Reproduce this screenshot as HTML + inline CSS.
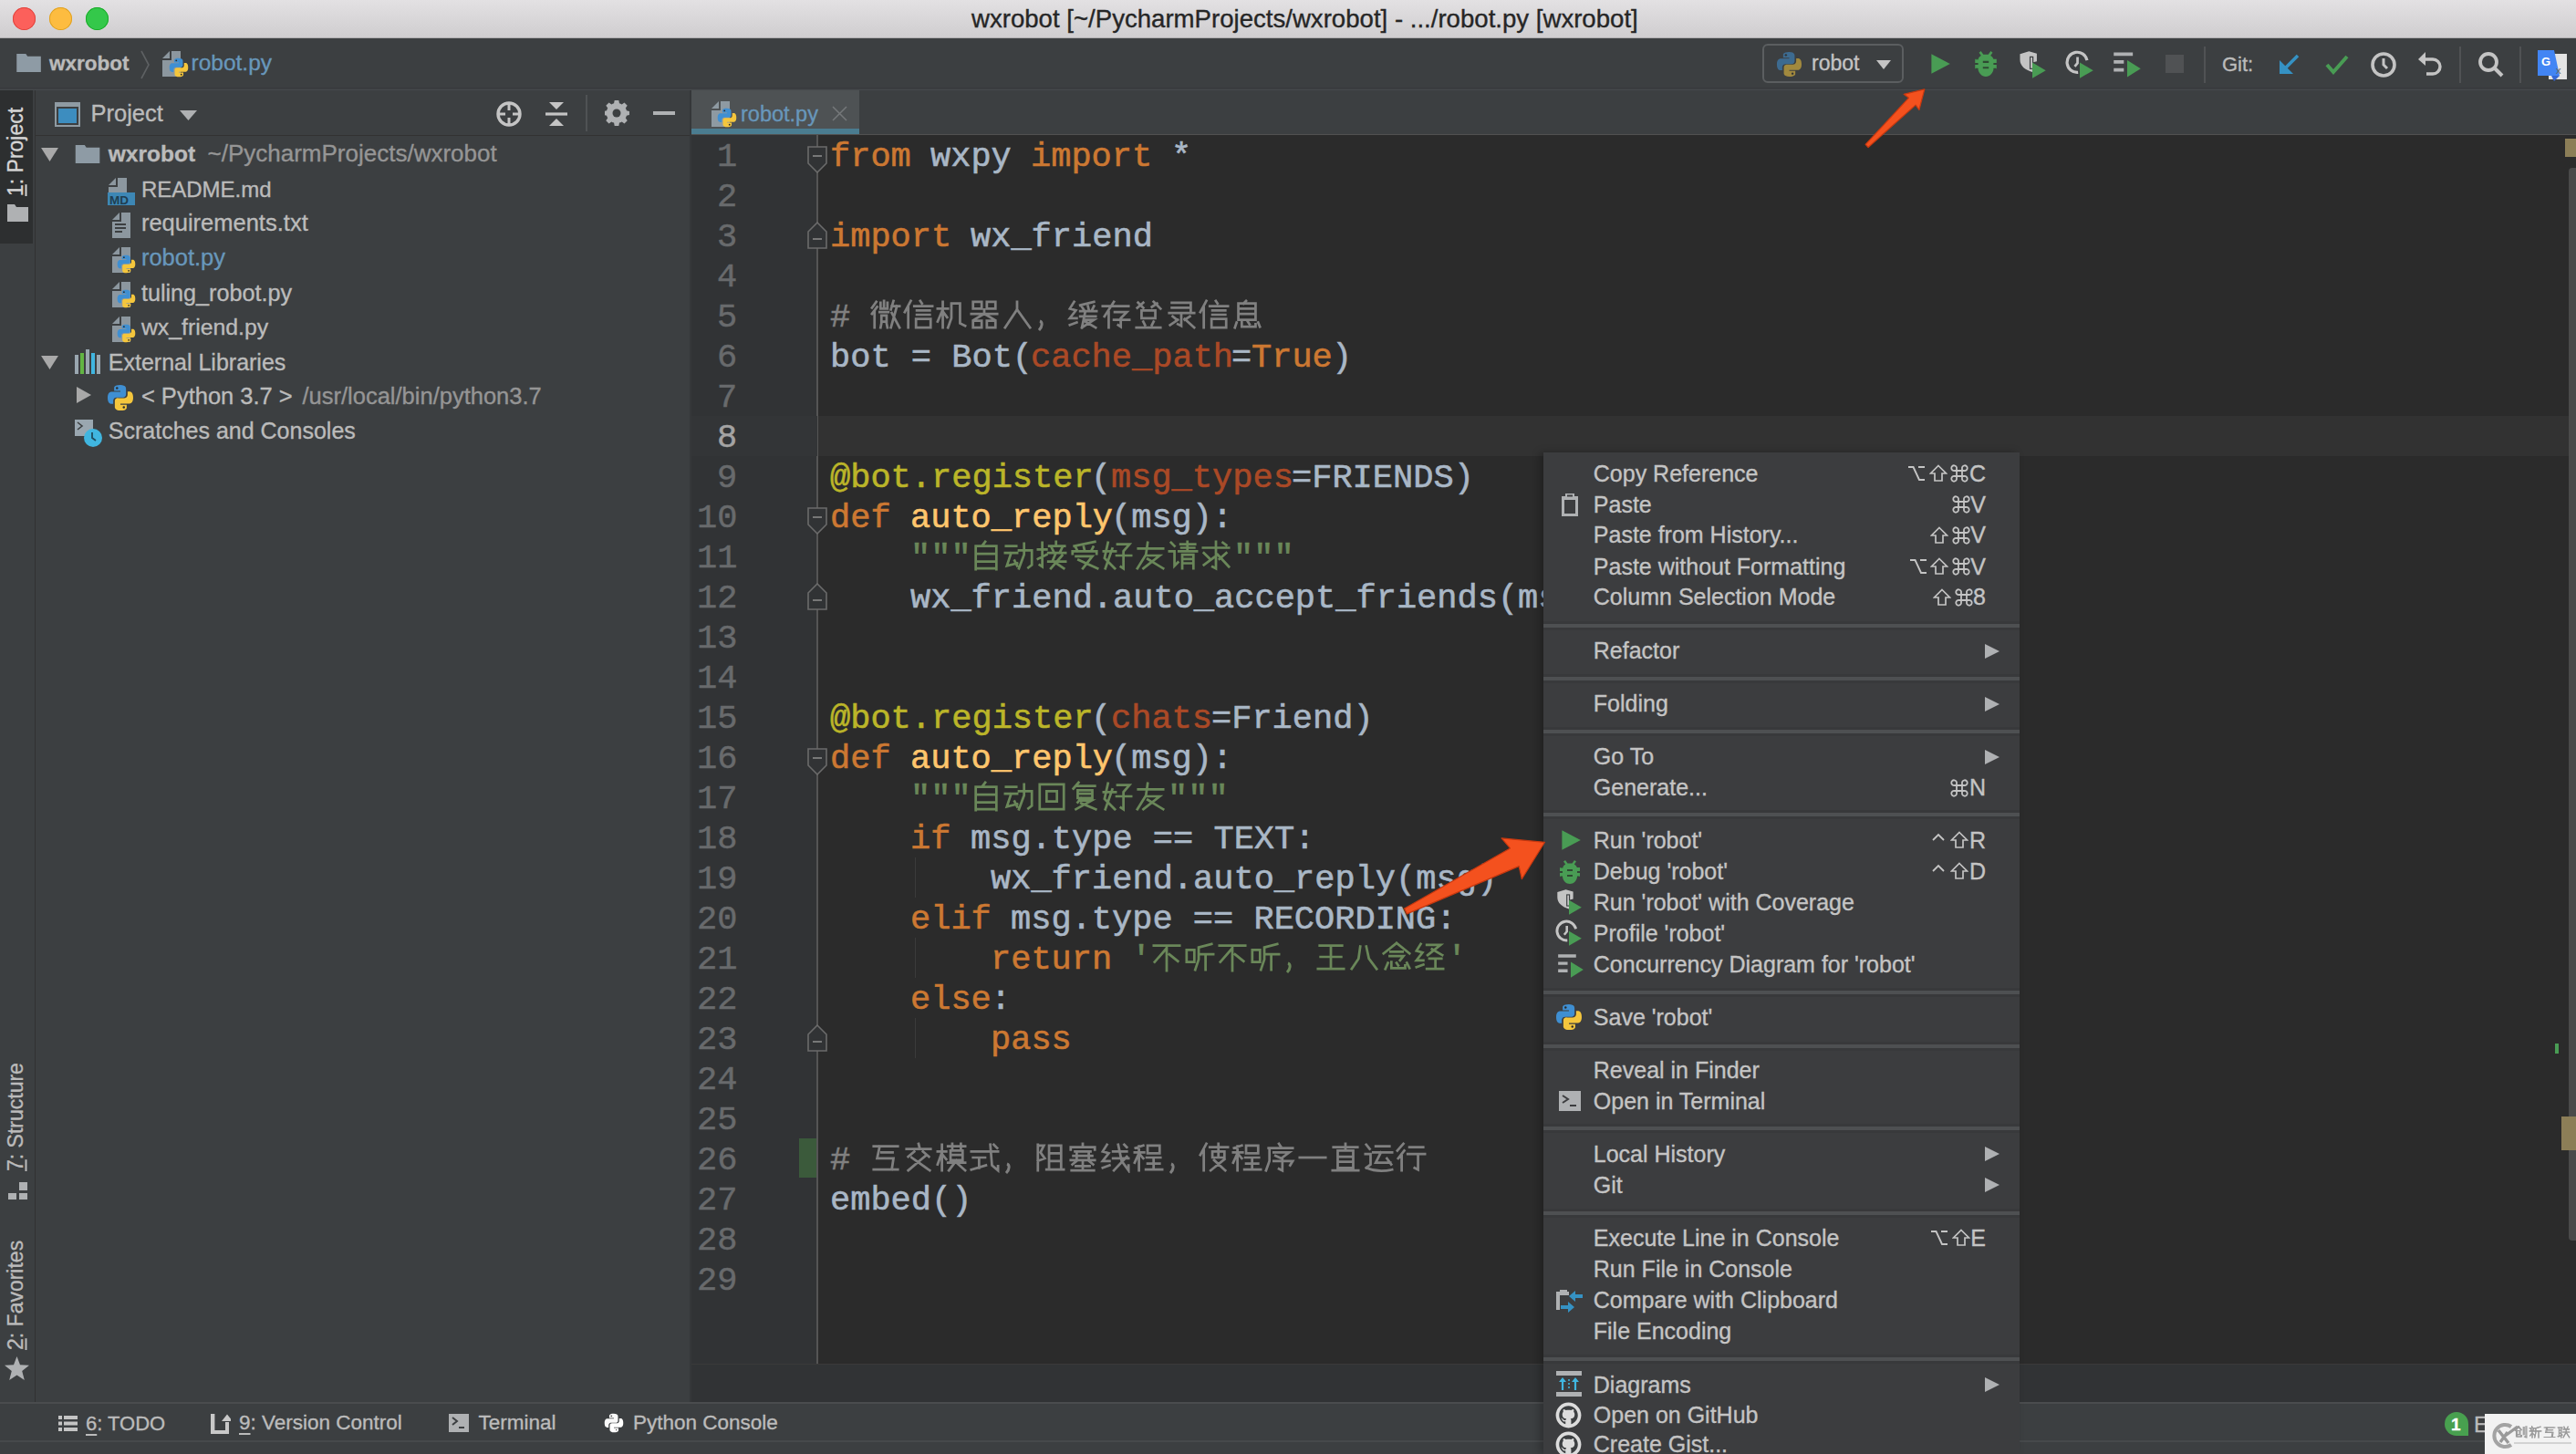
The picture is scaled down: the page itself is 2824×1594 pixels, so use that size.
<!DOCTYPE html><html><head><meta charset="utf-8"><style>
html,body{margin:0;padding:0;}
body{width:2824px;height:1594px;overflow:hidden;position:relative;background:#3c3f41;}
.b,.t,.s{position:absolute;}
.t{white-space:pre;-webkit-text-stroke:0.35px currentColor;}
</style></head><body><div class="b" style="left:0px;top:0px;width:2824px;height:42px;background:linear-gradient(#e3e1e3,#cfcdcf);border-bottom:1px solid #b0aeb0;box-sizing:border-box"></div>
<div class="b" style="left:13.5px;top:7.5px;width:25px;height:25px;border-radius:50%;background:#fc605b;box-shadow:inset 0 0 0 1px #e0443e"></div>
<div class="b" style="left:53.5px;top:7.5px;width:25px;height:25px;border-radius:50%;background:#fdbc40;box-shadow:inset 0 0 0 1px #dea123"></div>
<div class="b" style="left:93.5px;top:7.5px;width:25px;height:25px;border-radius:50%;background:#34c84a;box-shadow:inset 0 0 0 1px #1aab29"></div>
<div class="t" style="left:1065.0px;top:7.1px;font-family:'Liberation Sans', sans-serif;font-size:27.6px;line-height:27.6px;color:#262626;font-weight:400;">wxrobot [~/PycharmProjects/wxrobot] - .../robot.py [wxrobot]</div>
<div class="b" style="left:0px;top:42px;width:2824px;height:56px;background:#3c3f41;"></div>
<div class="b" style="left:0px;top:96px;width:2824px;height:1px;background:#37393c;"></div>
<div class="b" style="left:0px;top:98px;width:2824px;height:2px;background:#46494c;"></div>
<div class="b" style="left:0px;top:99px;width:38px;height:1438px;background:#3c3f41;"></div>
<div class="b" style="left:38px;top:99px;width:1px;height:1438px;background:#323232;"></div>
<div class="b" style="left:0px;top:99px;width:36px;height:168px;background:#2d2f30;"></div>
<div class="b" style="left:39px;top:99px;width:717px;height:1438px;background:#3c3f41;"></div>
<div class="b" style="left:756px;top:99px;width:3px;height:1438px;background:#353739;"></div>
<div class="b" style="left:39px;top:148px;width:717px;height:1px;background:#323232;"></div>
<div class="b" style="left:758px;top:99px;width:2066px;height:48px;background:#3c3f41;"></div>
<div class="b" style="left:758px;top:147px;width:2066px;height:1px;background:#515151;"></div>
<div class="b" style="left:758px;top:99px;width:184px;height:48px;background:#4e5254;"></div>
<div class="b" style="left:758px;top:141px;width:184px;height:6px;background:#4a7c90;"></div>
<div class="b" style="left:758px;top:148px;width:2066px;height:1348px;background:#2b2b2b;"></div>
<div class="b" style="left:758px;top:148px;width:138px;height:1348px;background:#313335;"></div>
<div class="b" style="left:895px;top:148px;width:2px;height:1348px;background:#555555;"></div>
<div class="b" style="left:897px;top:456px;width:1927px;height:44px;background:#323232;"></div>
<div class="b" style="left:758px;top:456px;width:138px;height:44px;background:#333537;"></div>
<div class="b" style="left:758px;top:1496px;width:2066px;height:41px;background:#313335;"></div>
<div class="b" style="left:758px;top:1495px;width:2066px;height:1px;background:#3a3a3a;"></div>
<div class="b" style="left:0px;top:1537px;width:2824px;height:44px;background:#3c3f41;"></div>
<div class="b" style="left:0px;top:1537px;width:2824px;height:2px;background:#4a4c4e;"></div>
<div class="b" style="left:0px;top:1581px;width:2824px;height:13px;background:#3c3f41;"></div>
<div class="b" style="left:0px;top:1579px;width:2824px;height:2px;background:#46494b;"></div>
<!--CONTENT-->

<svg width="0" height="0" style="position:absolute">
<defs>
<symbol id="py" viewBox="0 0 24 24">
<path fill="#3f8fd2" d="M11.9,0.8C6.2,0.8 6.5,3.3 6.5,3.3V5.9H12V6.8H4.3C4.3,6.8 0.8,6.4 0.8,12C0.8,17.6 3.8,17.4 3.8,17.4H5.7V14.8C5.7,14.8 5.6,11.7 8.7,11.7H14C14,11.7 16.9,11.8 16.9,8.9V4.1C16.9,4.1 17.3,0.8 11.9,0.8Z"/>
<circle cx="9" cy="3.6" r="1" fill="#2b2b2b"/>
<path fill="#f4c63d" d="M12.1,23.2C17.8,23.2 17.5,20.7 17.5,20.7V18.1H12V17.2H19.7C19.7,17.2 23.2,17.6 23.2,12C23.2,6.4 20.2,6.6 20.2,6.6H18.3V9.2C18.3,9.2 18.4,12.3 15.3,12.3H10C10,12.3 7.1,12.2 7.1,15.1V19.9C7.1,19.9 6.7,23.2 12.1,23.2Z"/>
<circle cx="15" cy="20.4" r="1" fill="#2b2b2b"/>
</symbol>
<symbol id="doc" viewBox="0 0 30 30">
<path fill="#9aa7b0" fill-opacity="0.85" d="M1,9 L9,1 V9 Z M11,1 H21 V29 H1 V11 H11 Z"/>
</symbol>
<symbol id="folder" viewBox="0 0 30 24">
<path fill="#8e9ba5" d="M0,1 H11 L13,4 H29 V23 H0 Z"/>
</symbol>
<symbol id="cmd" viewBox="0 0 20 20">
<path fill="none" stroke="#c4c4c4" stroke-width="1.8" d="M7,7H13V13H7Z M7,7V4.8A2.9,2.9 0 1 0 4.8,7H7 M13,7V4.8A2.9,2.9 0 1 1 15.2,7H13 M7,13V15.2A2.9,2.9 0 1 1 4.8,13H7 M13,13V15.2A2.9,2.9 0 1 0 15.2,13H13"/>
</symbol>
<symbol id="shift" viewBox="0 0 20 20">
<path fill="none" stroke="#c4c4c4" stroke-width="1.7" stroke-linejoin="miter" d="M10,1.5L18.5,10H14V18H6V10H1.5Z"/>
</symbol>
<symbol id="opt" viewBox="0 0 20 20">
<path fill="none" stroke="#c4c4c4" stroke-width="1.9" d="M1,3H6.5L13,17H19 M12,3H19"/>
</symbol>
<symbol id="ctrl" viewBox="0 0 20 20">
<path fill="none" stroke="#c4c4c4" stroke-width="1.9" d="M4,10L10,4L16,10"/>
</symbol>
<symbol id="play" viewBox="0 0 20 20"><path fill="#499c54" d="M2,1L19,10L2,19Z"/></symbol>
<symbol id="bug" viewBox="0 0 24 28">
<path fill="#499c54" d="M7,1L9.5,4.5H14.5L17,1L19,2.5L16.8,5.6C18.3,6.5 19.3,7.6 19.8,9H23V13H20V15H23V19H20C19.6,23.5 16.3,27 12,27C7.7,27 4.4,23.5 4,19H1V15H4V13H1V9H4.2C4.7,7.6 5.7,6.5 7.2,5.6L5,2.5Z"/>
<path fill="#2f4a33" d="M9,11H15V13H9Z M9,17H15V19H9Z M2,14H4V14.5H2Z M1.5,13.2H4V14.8H1.5Z M20,13.2H22.5V14.8H20Z M1.5,18.5H4V19.5H1.5Z M20,18.5H22.5V19.5H20Z M1.5,9.5H4.5V8.8H1.5Z"/>
</symbol>
<symbol id="cov" viewBox="0 0 26 26">
<path fill="#c4c4c4" d="M2,3.5L10,1L17,3V10L13,11V19.5C6.5,17.5 2,14 2,8.5Z"/>
<path fill="#3c3f41" d="M10.5,5.5H14V17H10.5Z"/>
<path fill="#c4c4c4" d="M11.5,6.5H13V16H11.5Z"/>
<path fill="#499c54" d="M13,11L25,18L13,25Z"/>
</symbol>
<symbol id="prof" viewBox="0 0 26 26">
<path fill="none" stroke="#c4c4c4" stroke-width="2.6" d="M19.5,9A9,9 0 1 0 11.5,19.8"/>
<path fill="none" stroke="#c4c4c4" stroke-width="2.2" d="M11,6V11.5L8.5,14.5"/>
<path fill="#499c54" d="M13,11L25,18L13,25Z"/>
</symbol>
<symbol id="conc" viewBox="0 0 26 26">
<path fill="#afb1b3" d="M1,2H18V5H1Z M1,9H10V12H1Z M1,16H10V19H1Z"/>
<path fill="#499c54" d="M13,9L25,16.5L13,24Z"/>
</symbol>
<symbol id="arrow" viewBox="0 0 18 20"><path fill="#a9a9a9" d="M1,1L17,10L1,19Z"/></symbol>
<symbol id="tri" viewBox="0 0 20 18"><path fill="#a9a9a9" d="M0,1H20L10,17Z"/></symbol>
<symbol id="gh" viewBox="0 0 24 24">
<circle cx="12" cy="12" r="11.5" fill="#dcdcdc"/>
<path fill="#3c3f41" d="M12,3.5C7.3,3.5 3.5,7.3 3.5,12C3.5,15.8 6,19 9.3,20.1V17.6C7,18.1 6.5,16.5 6.5,16.5C6.1,15.5 5.5,15.2 5.5,15.2C4.7,14.7 5.6,14.7 5.6,14.7C6.5,14.8 7,15.6 7,15.6C7.8,17 9.1,16.6 9.6,16.4C9.7,15.8 9.9,15.4 10.2,15.2C8.3,15 6.4,14.3 6.4,11.1C6.4,10.2 6.7,9.5 7.3,8.9C7.2,8.7 6.9,7.8 7.4,6.7C7.4,6.7 8.1,6.5 9.7,7.5C10.4,7.3 11.2,7.2 12,7.2C12.8,7.2 13.6,7.3 14.3,7.5C15.9,6.5 16.6,6.7 16.6,6.7C17.1,7.8 16.8,8.7 16.7,8.9C17.3,9.5 17.6,10.2 17.6,11.1C17.6,14.3 15.7,15 13.8,15.2C14.1,15.5 14.4,16 14.4,16.8V20.1C17.9,19 20.5,15.8 20.5,12C20.5,7.3 16.7,3.5 12,3.5Z"/>
</symbol>
</defs>
</svg>

<svg class="s" style="left:18px;top:58px;" width="28" height="22"><use href="#folder" width="28" height="22"/></svg>
<div class="t" style="left:54.0px;top:58.9px;font-family:'Liberation Sans', sans-serif;font-size:22.5px;line-height:22.5px;color:#bbbbbb;font-weight:700;">wxrobot</div>
<svg class="s" style="left:152px;top:55px;" width="14" height="32" viewBox="0 0 14 32"><path d="M3,1L11,16L3,31" fill="none" stroke="#5e6163" stroke-width="1.6"/></svg>
<svg class="s" style="left:177px;top:55px;" width="30" height="30"><use href="#doc" width="30" height="30"/></svg>
<svg class="s" style="left:185px;top:63px;" width="22" height="22"><use href="#py" width="22" height="22"/></svg>
<div class="t" style="left:209.5px;top:57.3px;font-family:'Liberation Sans', sans-serif;font-size:24.5px;line-height:24.5px;color:#6897bb;font-weight:400;">robot.py</div>
<div class="b" style="left:1932px;top:48px;width:155px;height:43px;border:2.5px solid #5b5e60;border-radius:6px;box-sizing:border-box"></div>
<svg class="s" style="left:1947px;top:56px;opacity:0.55" width="29" height="29"><use href="#py" width="29" height="29"/></svg>
<div class="t" style="left:1986.0px;top:58.0px;font-family:'Liberation Sans', sans-serif;font-size:23px;line-height:23px;color:#c4c4c4;font-weight:400;">robot</div>
<svg class="s" style="left:2056px;top:65px;" width="18" height="12" viewBox="0 0 18 12"><path d="M1,1H17L9,11Z" fill="#c4c4c4"/></svg>
<svg class="s" style="left:2115px;top:58px;" width="24" height="24"><use href="#play" width="24" height="24"/></svg>
<svg class="s" style="left:2162px;top:55px;" width="30" height="30"><use href="#bug" width="30" height="30"/></svg>
<svg class="s" style="left:2212px;top:55px;" width="32" height="32"><use href="#cov" width="32" height="32"/></svg>
<svg class="s" style="left:2264px;top:55px;" width="32" height="32"><use href="#prof" width="32" height="32"/></svg>
<svg class="s" style="left:2316px;top:55px;" width="32" height="32"><use href="#conc" width="32" height="32"/></svg>
<div class="b" style="left:2374px;top:60px;width:20px;height:20px;background:#505254;"></div>
<div class="b" style="left:2416px;top:51px;width:2px;height:40px;background:#505254;"></div>
<div class="t" style="left:2436.0px;top:60.4px;font-family:'Liberation Sans', sans-serif;font-size:22px;line-height:22px;color:#bbbbbb;font-weight:400;">Git:</div>
<svg class="s" style="left:2495px;top:57px;" width="28" height="28" viewBox="0 0 28 28"><path d="M24,4L8,20" stroke="#3592c4" stroke-width="3.5"/><path d="M4,9V24H19Z" fill="#3592c4"/></svg>
<svg class="s" style="left:2548px;top:57px;" width="28" height="28" viewBox="0 0 28 28"><path d="M3,14L10,22L25,5" fill="none" stroke="#499c54" stroke-width="4"/></svg>
<svg class="s" style="left:2598px;top:56px;" width="30" height="30" viewBox="0 0 30 30"><circle cx="15" cy="15" r="12" fill="none" stroke="#c4c4c4" stroke-width="3.6"/><path d="M15,8V15L19,19" fill="none" stroke="#c4c4c4" stroke-width="3"/></svg>
<svg class="s" style="left:2650px;top:55px;" width="30" height="30" viewBox="0 0 30 30"><path d="M9,2L1,10L9,17Z" fill="#c4c4c4"/><path d="M7,10H17A8,8 0 0 1 17,26H10" fill="none" stroke="#c4c4c4" stroke-width="3.4"/></svg>
<div class="b" style="left:2696px;top:51px;width:2px;height:40px;background:#505254;"></div>
<svg class="s" style="left:2716px;top:56px;" width="30" height="30" viewBox="0 0 30 30"><circle cx="12" cy="12" r="9" fill="none" stroke="#c4c4c4" stroke-width="3.8"/><path d="M18.5,18.5L27,27" stroke="#c4c4c4" stroke-width="4"/></svg>
<div class="b" style="left:2762px;top:51px;width:2px;height:40px;background:#505254;"></div>
<svg class="s" style="left:2780px;top:53px;" width="36" height="36" viewBox="0 0 36 36"><path d="M14,6H34V34H14Z" fill="#e4e4e4"/><path d="M2,2H20L26,30H2Z" fill="#4285f4"/><path d="M17,30L26,30L20,36Z" fill="#3367d6"/><text x="6" y="19" font-family="Liberation Sans" font-weight="700" font-size="13" fill="#fff">G</text><text x="22" y="28" font-family="Liberation Sans" font-size="11" fill="#666">x</text></svg>
<div class="t" style="left:17px;top:215px;font-family:'Liberation Sans', sans-serif;font-size:23px;line-height:23px;color:#d6d6d6;transform-origin:0 0;transform:rotate(-90deg) translateY(-50%);"><u style="text-decoration-thickness:1.5px;text-underline-offset:3px">1</u>: Project</div>
<svg class="s" style="left:8px;top:224px;" width="23" height="19" viewBox="0 0 23 19"><path d="M0,0H8L10,3H23V19H0Z" fill="#afb1b3"/></svg>
<div class="t" style="left:17px;top:1284px;font-family:'Liberation Sans', sans-serif;font-size:23px;line-height:23px;color:#bbbbbb;transform-origin:0 0;transform:rotate(-90deg) translateY(-50%);"><u style="text-decoration-thickness:1.5px;text-underline-offset:3px">7</u>: Structure</div>
<svg class="s" style="left:9px;top:1296px;" width="22" height="19" viewBox="0 0 22 19"><path d="M12,0H21V9H12Z M0,12H9V19H0Z M12,12H21V19H12Z" fill="#afb1b3"/></svg>
<div class="t" style="left:17px;top:1480px;font-family:'Liberation Sans', sans-serif;font-size:23px;line-height:23px;color:#bbbbbb;transform-origin:0 0;transform:rotate(-90deg) translateY(-50%);"><u style="text-decoration-thickness:1.5px;text-underline-offset:3px">2</u>: Favorites</div>
<svg class="s" style="left:5px;top:1487px;" width="27" height="26" viewBox="0 0 27 26"><path d="M13.5,0L17,9.3L27,9.8L19.2,16L21.8,26L13.5,20.4L5.2,26L7.8,16L0,9.8L10,9.3Z" fill="#afb1b3"/></svg>
<svg class="s" style="left:60px;top:112px;" width="28" height="27" viewBox="0 0 28 27"><rect x="1" y="1" width="26" height="25" fill="none" stroke="#8f9ba3" stroke-width="2"/><rect x="1" y="1" width="26" height="4" fill="#8f9ba3"/><rect x="4" y="7" width="20" height="16" fill="#3d8dbf"/></svg>
<div class="t" style="left:99.5px;top:112.4px;font-family:'Liberation Sans', sans-serif;font-size:25.5px;line-height:25.5px;color:#bbbbbb;font-weight:400;">Project</div>
<svg class="s" style="left:197px;top:121px;" width="19" height="11" viewBox="0 0 19 11"><path d="M0,0H19L9.5,11Z" fill="#afb1b3"/></svg>
<svg class="s" style="left:543px;top:110px;" width="30" height="30" viewBox="0 0 30 30"><circle cx="15" cy="15" r="12" fill="none" stroke="#c4c4c4" stroke-width="3.4"/><path d="M15,3V11M15,19V27M3,15H11M19,15H27" stroke="#c4c4c4" stroke-width="3"/></svg>
<svg class="s" style="left:597px;top:110px;" width="26" height="30" viewBox="0 0 26 30"><path d="M1,15H25" stroke="#c4c4c4" stroke-width="3.2"/><path d="M5,2H21L13,10Z M5,28H21L13,20Z" fill="#c4c4c4"/></svg>
<div class="b" style="left:642px;top:104px;width:2px;height:40px;background:#4f5254;"></div>
<svg class="s" style="left:663px;top:110px;" width="28" height="28" viewBox="0 0 28 28"><path fill="#afb1b3" d="M11.5,0H16.5L17.2,3.6A11,11 0 0 1 20.1,4.8L23.1,2.7L26.6,6.2L24.5,9.2A11,11 0 0 1 25.7,12.1L29,12.8V17.2L25.7,17.9A11,11 0 0 1 24.5,20.8L26.6,23.8L23.1,27.3L20.1,25.2A11,11 0 0 1 17.2,26.4L16.5,30H11.5L10.8,26.4A11,11 0 0 1 7.9,25.2L4.9,27.3L1.4,23.8L3.5,20.8A11,11 0 0 1 2.3,17.9L-1,17.2V12.8L2.3,12.1A11,11 0 0 1 3.5,9.2L1.4,6.2L4.9,2.7L7.9,4.8A11,11 0 0 1 10.8,3.6Z" transform="scale(0.93)"/><circle cx="13" cy="14" r="4.5" fill="#3c3f41"/></svg>
<div class="b" style="left:716px;top:122px;width:24px;height:4px;background:#afb1b3;"></div>
<svg class="s" style="left:45px;top:161px;" width="19" height="17"><use href="#tri" width="19" height="17"/></svg>
<svg class="s" style="left:82px;top:158px;" width="29" height="22"><use href="#folder" width="29" height="22"/></svg>
<div class="t" style="left:118.8px;top:156.7px;font-family:'Liberation Sans', sans-serif;font-size:24.5px;line-height:24.5px;color:#bbbbbb;font-weight:700;">wxrobot</div>
<div class="t" style="left:227.5px;top:155.4px;font-family:'Liberation Sans', sans-serif;font-size:26px;line-height:26px;color:#959595;font-weight:400;">~/PycharmProjects/wxrobot</div>
<svg class="s" style="left:118px;top:194px;" width="30" height="30"><use href="#doc" width="30" height="30"/></svg>
<svg class="s" style="left:118px;top:211px;" width="30" height="14" viewBox="0 0 30 14"><rect width="30" height="14" fill="#3d87b5"/><text x="2" y="12.5" font-family="Liberation Sans" font-weight="700" font-size="13.5" fill="#1f3e52">MD</text></svg>
<div class="t" style="left:154.9px;top:195.6px;font-family:'Liberation Sans', sans-serif;font-size:24px;line-height:24px;color:#bbbbbb;font-weight:400;">README.md</div>
<svg class="s" style="left:122px;top:232px;" width="30" height="30"><use href="#doc" width="30" height="30"/></svg>
<svg class="s" style="left:126px;top:245px;" width="12" height="12" viewBox="0 0 12 12"><path d="M0,1H12M0,5H12M0,9H8" stroke="#3c3f41" stroke-width="1.8"/></svg>
<div class="t" style="left:154.9px;top:231.7px;font-family:'Liberation Sans', sans-serif;font-size:25.5px;line-height:25.5px;color:#bbbbbb;font-weight:400;">requirements.txt</div>
<svg class="s" style="left:122px;top:270px;" width="30" height="30"><use href="#doc" width="30" height="30"/></svg>
<svg class="s" style="left:128px;top:279px;" width="21" height="21"><use href="#py" width="21" height="21"/></svg>
<div class="t" style="left:154.9px;top:270.4px;font-family:'Liberation Sans', sans-serif;font-size:25.5px;line-height:25.5px;color:#6897bb;font-weight:400;">robot.py</div>
<svg class="s" style="left:122px;top:308px;" width="30" height="30"><use href="#doc" width="30" height="30"/></svg>
<svg class="s" style="left:128px;top:317px;" width="21" height="21"><use href="#py" width="21" height="21"/></svg>
<div class="t" style="left:154.9px;top:308.7px;font-family:'Liberation Sans', sans-serif;font-size:25.2px;line-height:25.2px;color:#bbbbbb;font-weight:400;">tuling_robot.py</div>
<svg class="s" style="left:122px;top:346px;" width="30" height="30"><use href="#doc" width="30" height="30"/></svg>
<svg class="s" style="left:128px;top:355px;" width="21" height="21"><use href="#py" width="21" height="21"/></svg>
<div class="t" style="left:154.9px;top:347.0px;font-family:'Liberation Sans', sans-serif;font-size:24.8px;line-height:24.8px;color:#bbbbbb;font-weight:400;">wx_friend.py</div>
<svg class="s" style="left:45px;top:389px;" width="19" height="17"><use href="#tri" width="19" height="17"/></svg>
<svg class="s" style="left:82px;top:383px;" width="29" height="27" viewBox="0 0 29 27"><rect x="0" y="6" width="4" height="21" fill="#9aa7b0"/><rect x="6" y="4" width="4" height="23" fill="#62b543"/><rect x="12" y="0" width="4" height="27" fill="#9aa7b0"/><rect x="18" y="4" width="4" height="23" fill="#40b6e0"/><rect x="24" y="6" width="4" height="21" fill="#9aa7b0"/></svg>
<div class="t" style="left:118.8px;top:385.3px;font-family:'Liberation Sans', sans-serif;font-size:25px;line-height:25px;color:#bbbbbb;font-weight:400;">External Libraries</div>
<svg class="s" style="left:83px;top:423px;" width="18" height="20"><use href="#arrow" width="18" height="20"/></svg>
<svg class="s" style="left:117px;top:421px;" width="30" height="30"><use href="#py" width="30" height="30"/></svg>
<div class="t" style="left:154.9px;top:422.4px;font-family:'Liberation Sans', sans-serif;font-size:25.5px;line-height:25.5px;color:#bbbbbb;font-weight:400;">&lt; Python 3.7 &gt;</div>
<div class="t" style="left:331.5px;top:422.4px;font-family:'Liberation Sans', sans-serif;font-size:25.5px;line-height:25.5px;color:#959595;font-weight:400;">/usr/local/bin/python3.7</div>
<svg class="s" style="left:82px;top:460px;" width="30" height="30" viewBox="0 0 30 30"><rect x="0" y="0" width="20" height="18" fill="#9aa7b0"/><path d="M3,3L8,7L3,11" fill="none" stroke="#3c3f41" stroke-width="1.6"/><circle cx="20" cy="20" r="10" fill="#40b6e0"/><path d="M19,14V20L23,23" fill="none" stroke="#1f4c5e" stroke-width="1.8"/></svg>
<div class="t" style="left:118.8px;top:459.8px;font-family:'Liberation Sans', sans-serif;font-size:25px;line-height:25px;color:#bbbbbb;font-weight:400;">Scratches and Consoles</div>
<svg class="s" style="left:779px;top:110px;" width="30" height="30"><use href="#doc" width="30" height="30"/></svg>
<svg class="s" style="left:786px;top:118px;" width="22" height="22"><use href="#py" width="22" height="22"/></svg>
<div class="t" style="left:812.0px;top:114.1px;font-family:'Liberation Sans', sans-serif;font-size:23.5px;line-height:23.5px;color:#6897bb;font-weight:400;">robot.py</div>
<svg class="s" style="left:912px;top:116px;" width="17" height="17" viewBox="0 0 17 17"><path d="M1,1L16,16M16,1L1,16" stroke="#75787a" stroke-width="1.5"/></svg>
<svg width="0" height="0" style="position:absolute"><defs><symbol id="cj0" viewBox="0 0 36 36"><path d="M7,3 L2,10 M8,9 L2,17 M5,14 V33 M12,4 V11 H20 V4 M16,2 V11 M11,15 H21 M13,19 H19 V26 H13Z M13,28 L12,33 M19,28 L20,33 M27,2 L24,12 M25,8 H34 M31,8 L24,33 M25,16 L34,33" fill="none" stroke="currentColor" stroke-width="2.9" stroke-linecap="square"/></symbol><symbol id="cj1" viewBox="0 0 36 36"><path d="M9,2 L2,15 M6,10 V33 M20,2 L22,5 M13,8 H34 M16,13 H31 M16,18 H31 M15,23 H32 V33 H15Z" fill="none" stroke="currentColor" stroke-width="2.9" stroke-linecap="square"/></symbol><symbol id="cj2" viewBox="0 0 36 36"><path d="M2,11 H14 M8,3 V33 M8,12 L2,26 M8,14 L13,21 M18,5 H28 V28 L34,31 M18,5 V22 L14,33" fill="none" stroke="currentColor" stroke-width="2.9" stroke-linecap="square"/></symbol><symbol id="cj3" viewBox="0 0 36 36"><path d="M5,3 H15 V11 H5Z M21,3 H31 V11 H21Z M3,17 H33 M18,12 V17 L6,24 M18,17 L30,24 M5,25 H15 V33 H5Z M21,25 H31 V33 H21Z" fill="none" stroke="currentColor" stroke-width="2.9" stroke-linecap="square"/></symbol><symbol id="cj4" viewBox="0 0 36 36"><path d="M18,3 V12 L4,33 M18,12 L33,33" fill="none" stroke="currentColor" stroke-width="2.9" stroke-linecap="square"/></symbol><symbol id="cj5" viewBox="0 0 36 36"><path d="M8,3 L3,11 L10,13 L3,22 H11 M3,30 L11,27 M31,3 L15,7 M17,9 L19,12 M24,8 L25,12 M31,8 L29,12 M15,14 H34 M15,20 H33 M21,14 L17,33 M19,24 H31 L17,33 M21,26 L33,33" fill="none" stroke="currentColor" stroke-width="2.9" stroke-linecap="square"/></symbol><symbol id="cj6" viewBox="0 0 36 36"><path d="M3,8 H33 M16,3 L5,20 M10,15 V33 M17,15 H31 L24,22 V32 L21,30 M16,24 H34" fill="none" stroke="currentColor" stroke-width="2.9" stroke-linecap="square"/></symbol><symbol id="cj7" viewBox="0 0 36 36"><path d="M6,4 L12,10 M5,10 L12,4 M24,3 L32,11 M22,9 L28,5 M10,13 H26 V22 H10Z M12,26 L14,30 M24,26 L22,30 M4,33 H32" fill="none" stroke="currentColor" stroke-width="2.9" stroke-linecap="square"/></symbol><symbol id="cj8" viewBox="0 0 36 36"><path d="M7,4 H29 V16 M7,10 H29 M4,16 H33 M18,16 V31 L14,29 M8,20 L13,24 M5,30 L14,24 M28,20 L22,24 M22,23 L33,33" fill="none" stroke="currentColor" stroke-width="2.9" stroke-linecap="square"/></symbol><symbol id="cj9" viewBox="0 0 36 36"><path d="M17,2 L14,5 M8,5 H28 V24 H8Z M8,11 H28 M8,17 H28 M6,27 L4,33 M12,26 V32 H28 V29 M19,26 L21,29 M31,27 L33,32" fill="none" stroke="currentColor" stroke-width="2.9" stroke-linecap="square"/></symbol><symbol id="cj10" viewBox="0 0 36 36"><path d="M17,2 L14,6 M6,7 H30 V34 M6,7 V34 M6,16 H30 M6,25 H30 M6,33 H30" fill="none" stroke="currentColor" stroke-width="2.9" stroke-linecap="square"/></symbol><symbol id="cj11" viewBox="0 0 36 36"><path d="M3,7 H15 M2,15 H16 M9,15 L4,30 L16,27 M13,24 L16,30 M18,12 H33 V29 L29,32 M24,4 V17 L18,33" fill="none" stroke="currentColor" stroke-width="2.9" stroke-linecap="square"/></symbol><symbol id="cj12" viewBox="0 0 36 36"><path d="M2,11 H12 M7,3 V31 L4,29 M2,22 L12,17 M23,2 V6 M15,7 H33 M18,9 L20,13 M30,9 L28,13 M14,15 H34 M22,17 L19,24 L32,33 M30,18 L17,33 M14,25 H34" fill="none" stroke="currentColor" stroke-width="2.9" stroke-linecap="square"/></symbol><symbol id="cj13" viewBox="0 0 36 36"><path d="M30,2 L6,7 M8,9 L10,13 M17,8 L18,12 M28,8 L26,12 M4,16 V13 H32 V16 M8,19 H27 L16,33 M11,23 L33,33" fill="none" stroke="currentColor" stroke-width="2.9" stroke-linecap="square"/></symbol><symbol id="cj14" viewBox="0 0 36 36"><path d="M7,3 L3,21 L15,33 M12,10 L4,33 M2,13 H16 M18,5 H32 L25,13 V33 L22,31 M17,18 H34" fill="none" stroke="currentColor" stroke-width="2.9" stroke-linecap="square"/></symbol><symbol id="cj15" viewBox="0 0 36 36"><path d="M4,10 H33 M15,3 L13,17 L3,33 M14,18 H29 L10,33 M15,22 L33,33" fill="none" stroke="currentColor" stroke-width="2.9" stroke-linecap="square"/></symbol><symbol id="cj16" viewBox="0 0 36 36"><path d="M4,3 L8,7 M2,13 H8 V30 L12,26 M23,2 V12 M15,5 H32 M16,9 H31 M13,13 H34 M17,17 H30 V33 M17,17 V33 M17,22 H30 M17,27 H30" fill="none" stroke="currentColor" stroke-width="2.9" stroke-linecap="square"/></symbol><symbol id="cj17" viewBox="0 0 36 36"><path d="M3,9 H33 M18,2 V33 L14,31 M26,3 L30,6 M4,15 L10,21 M4,29 L16,20 M20,17 L33,31 M30,15 L22,22" fill="none" stroke="currentColor" stroke-width="2.9" stroke-linecap="square"/></symbol><symbol id="cj18" viewBox="0 0 36 36"><path d="M4,4 H32 V33 H4Z M12,12 H24 V24 H12Z" fill="none" stroke="currentColor" stroke-width="2.9" stroke-linecap="square"/></symbol><symbol id="cj19" viewBox="0 0 36 36"><path d="M11,2 L5,9 M9,6 H30 M10,11 H27 V20 H10Z M10,15 H27 M14,20 L10,25 M12,23 H26 L8,33 M14,26 L31,33" fill="none" stroke="currentColor" stroke-width="2.9" stroke-linecap="square"/></symbol><symbol id="cj20" viewBox="0 0 36 36"><path d="M3,5 H33 M18,5 V34 M17,9 L4,24 M21,15 L31,23" fill="none" stroke="currentColor" stroke-width="2.9" stroke-linecap="square"/></symbol><symbol id="cj21" viewBox="0 0 36 36"><path d="M3,10 H12 V24 H3Z M32,3 L17,7 V21 L13,33 M17,15 H34 M25,15 V33" fill="none" stroke="currentColor" stroke-width="2.9" stroke-linecap="square"/></symbol><symbol id="cj22" viewBox="0 0 36 36"><path d="M5,5 H31 M6,18 H30 M18,5 V32 M3,32 H33" fill="none" stroke="currentColor" stroke-width="2.9" stroke-linecap="square"/></symbol><symbol id="cj23" viewBox="0 0 36 36"><path d="M14,6 L12,20 L4,32 M21,6 L24,20 L33,32" fill="none" stroke="currentColor" stroke-width="2.9" stroke-linecap="square"/></symbol><symbol id="cj24" viewBox="0 0 36 36"><path d="M18,2 L3,14 M18,2 L33,14 M11,12 H25 M10,17 H26 L22,22 M8,25 L5,32 M12,24 V31 H28 V28 M18,25 L20,28 M30,25 L33,31" fill="none" stroke="currentColor" stroke-width="2.9" stroke-linecap="square"/></symbol><symbol id="cj25" viewBox="0 0 36 36"><path d="M8,3 L3,11 L10,13 L3,22 H11 M3,30 L11,27 M15,4 H31 L16,16 M21,9 L33,16 M18,20 H32 M25,20 V32 M15,32 H34" fill="none" stroke="currentColor" stroke-width="2.9" stroke-linecap="square"/></symbol><symbol id="cj26" viewBox="0 0 36 36"><path d="M4,5 H32 M11,5 L8,19 H27 L25,32 M4,32 H32 M13,12 H26" fill="none" stroke="currentColor" stroke-width="2.9" stroke-linecap="square"/></symbol><symbol id="cj27" viewBox="0 0 36 36"><path d="M18,2 L19,6 M4,8 H32 M13,11 L6,17 M23,11 L30,17 M26,16 L6,33 M10,18 L31,33" fill="none" stroke="currentColor" stroke-width="2.9" stroke-linecap="square"/></symbol><symbol id="cj28" viewBox="0 0 36 36"><path d="M2,11 H12 M7,3 V33 M7,12 L2,26 M7,14 L12,20 M14,5 H34 M19,2 V8 M29,2 V8 M17,10 H31 V21 H17Z M17,15 H31 M14,24 H34 M24,21 L15,33 M24,24 L34,33" fill="none" stroke="currentColor" stroke-width="2.9" stroke-linecap="square"/></symbol><symbol id="cj29" viewBox="0 0 36 36"><path d="M3,11 H34 M25,3 L27,27 L34,33 V28 M29,3 L33,7 M5,18 H19 M12,18 V30 M3,32 L20,27" fill="none" stroke="currentColor" stroke-width="2.9" stroke-linecap="square"/></symbol><symbol id="cj30" viewBox="0 0 36 36"><path d="M4,3 V33 M4,4 H11 L7,12 L12,19 L4,22 M17,4 H31 V31 M17,4 V31 M17,13 H31 M17,22 H31 M14,32 H34" fill="none" stroke="currentColor" stroke-width="2.9" stroke-linecap="square"/></symbol><symbol id="cj31" viewBox="0 0 36 36"><path d="M18,2 V5 M4,9 V6 H32 V9 M9,11 H27 M11,11 V20 M25,11 V20 M7,16 H29 M4,21 H32 M12,21 L6,26 M24,21 L30,26 M18,24 V33 M10,28 H26 M5,33 H31" fill="none" stroke="currentColor" stroke-width="2.9" stroke-linecap="square"/></symbol><symbol id="cj32" viewBox="0 0 36 36"><path d="M8,3 L3,11 L10,13 L3,22 H11 M3,30 L11,27 M15,11 H31 M15,19 H33 M21,3 L25,22 L33,33 V27 M28,3 L31,6 M31,17 L16,33" fill="none" stroke="currentColor" stroke-width="2.9" stroke-linecap="square"/></symbol><symbol id="cj33" viewBox="0 0 36 36"><path d="M3,7 L12,4 M2,12 H13 M7,5 V33 M7,13 L2,24 M7,13 L12,19 M17,4 H31 V13 H17Z M16,18 H32 M17,25 H31 M24,18 V32 M15,32 H34" fill="none" stroke="currentColor" stroke-width="2.9" stroke-linecap="square"/></symbol><symbol id="cj34" viewBox="0 0 36 36"><path d="M9,2 L2,15 M6,10 V33 M13,6 H34 M23,2 V18 M16,11 H30 V18 H16Z M18,21 L31,33 M30,20 L14,33" fill="none" stroke="currentColor" stroke-width="2.9" stroke-linecap="square"/></symbol><symbol id="cj35" viewBox="0 0 36 36"><path d="M17,2 L19,5 M5,7 H33 M6,7 V22 L2,33 M11,12 H29 L21,18 M13,16 L20,19 M11,22 H33 L30,27 M21,19 V33 L17,31" fill="none" stroke="currentColor" stroke-width="2.9" stroke-linecap="square"/></symbol><symbol id="cj36" viewBox="0 0 36 36"><path d="M3,18 H33" fill="none" stroke="currentColor" stroke-width="2.9" stroke-linecap="square"/></symbol><symbol id="cj37" viewBox="0 0 36 36"><path d="M4,6 H32 M18,2 V10 M9,10 H27 V30 H9Z M9,17 H27 M9,23 H27 M3,33 H33" fill="none" stroke="currentColor" stroke-width="2.9" stroke-linecap="square"/></symbol><symbol id="cj38" viewBox="0 0 36 36"><path d="M4,3 L8,8 M3,14 H9 V26 L4,30 M4,30 Q18,36 34,32 M15,5 H31 M12,12 H34 M21,12 L15,24 H32 M28,19 L33,26" fill="none" stroke="currentColor" stroke-width="2.9" stroke-linecap="square"/></symbol><symbol id="cj39" viewBox="0 0 36 36"><path d="M9,2 L2,10 M10,10 L3,19 M7,15 V33 M16,6 H32 M14,14 H34 M26,14 V32 L22,30" fill="none" stroke="currentColor" stroke-width="2.9" stroke-linecap="square"/></symbol><symbol id="cj40" viewBox="0 0 36 36"><path d="M10,2 L2,14 M10,2 L18,12 M5,14 H14 V25 H8 M5,14 V31 H18 V27 M25,4 V25 M32,2 V33 L28,31" fill="none" stroke="currentColor" stroke-width="2.9" stroke-linecap="square"/></symbol><symbol id="cj41" viewBox="0 0 36 36"><path d="M8,2 L9,5 M2,7 H16 M5,9 L7,13 M13,9 L11,13 M2,15 H16 M9,15 V33 M9,20 L3,28 M9,20 L15,26 M32,3 L19,7 V20 L16,33 M19,15 H34 M27,15 V33" fill="none" stroke="currentColor" stroke-width="2.9" stroke-linecap="square"/></symbol><symbol id="cj42" viewBox="0 0 36 36"><path d="M2,5 H14 M5,5 V30 M11,5 V33 M5,13 H11 M5,21 H11 M2,30 L14,26 M19,3 L21,7 M30,3 L28,7 M17,10 H33 M16,18 H34 M25,10 V18 L17,33 M25,19 L34,33" fill="none" stroke="currentColor" stroke-width="2.9" stroke-linecap="square"/></symbol></defs></svg>
<div class="t" style="left:910.0px;top:153.7px;font-family:'Liberation Mono', monospace;font-size:37px;line-height:37px;color:#cc7832;font-weight:400;white-space:pre;-webkit-text-stroke:0.6px #cc7832">from</div>
<div class="t" style="left:1020.0px;top:153.7px;font-family:'Liberation Mono', monospace;font-size:37px;line-height:37px;color:#a9b7c6;font-weight:400;white-space:pre;-webkit-text-stroke:0.6px #a9b7c6">wxpy </div>
<div class="t" style="left:1130.0px;top:153.7px;font-family:'Liberation Mono', monospace;font-size:37px;line-height:37px;color:#cc7832;font-weight:400;white-space:pre;-webkit-text-stroke:0.6px #cc7832">import</div>
<div class="t" style="left:1284.0px;top:153.7px;font-family:'Liberation Mono', monospace;font-size:37px;line-height:37px;color:#a9b7c6;font-weight:400;white-space:pre;-webkit-text-stroke:0.6px #a9b7c6">*</div>
<div class="t" style="left:910.0px;top:241.7px;font-family:'Liberation Mono', monospace;font-size:37px;line-height:37px;color:#cc7832;font-weight:400;white-space:pre;-webkit-text-stroke:0.6px #cc7832">import</div>
<div class="t" style="left:1064.0px;top:241.7px;font-family:'Liberation Mono', monospace;font-size:37px;line-height:37px;color:#a9b7c6;font-weight:400;white-space:pre;-webkit-text-stroke:0.6px #a9b7c6">wx_friend</div>
<div class="t" style="left:910.0px;top:329.7px;font-family:'Liberation Mono', monospace;font-size:37px;line-height:37px;color:#808080;font-weight:400;white-space:pre;-webkit-text-stroke:0.6px #808080"># </div>
<svg class="s" style="left:954px;top:328px;color:#808080" width="34" height="34"><use href="#cj0" width="34" height="34"/></svg>
<svg class="s" style="left:990px;top:328px;color:#808080" width="34" height="34"><use href="#cj1" width="34" height="34"/></svg>
<svg class="s" style="left:1026px;top:328px;color:#808080" width="34" height="34"><use href="#cj2" width="34" height="34"/></svg>
<svg class="s" style="left:1062px;top:328px;color:#808080" width="34" height="34"><use href="#cj3" width="34" height="34"/></svg>
<svg class="s" style="left:1098px;top:328px;color:#808080" width="34" height="34"><use href="#cj4" width="34" height="34"/></svg>
<svg class="s" style="left:1134px;top:350px;" width="36" height="14" viewBox="0 0 36 14"><path d="M6,2 C9,3 9,8 5,12" fill="none" stroke="#808080" stroke-width="3"/></svg>
<svg class="s" style="left:1170px;top:328px;color:#808080" width="34" height="34"><use href="#cj5" width="34" height="34"/></svg>
<svg class="s" style="left:1206px;top:328px;color:#808080" width="34" height="34"><use href="#cj6" width="34" height="34"/></svg>
<svg class="s" style="left:1242px;top:328px;color:#808080" width="34" height="34"><use href="#cj7" width="34" height="34"/></svg>
<svg class="s" style="left:1278px;top:328px;color:#808080" width="34" height="34"><use href="#cj8" width="34" height="34"/></svg>
<svg class="s" style="left:1314px;top:328px;color:#808080" width="34" height="34"><use href="#cj1" width="34" height="34"/></svg>
<svg class="s" style="left:1350px;top:328px;color:#808080" width="34" height="34"><use href="#cj9" width="34" height="34"/></svg>
<div class="t" style="left:910.0px;top:373.7px;font-family:'Liberation Mono', monospace;font-size:37px;line-height:37px;color:#a9b7c6;font-weight:400;white-space:pre;-webkit-text-stroke:0.6px #a9b7c6">bot = Bot(</div>
<div class="t" style="left:1130.0px;top:373.7px;font-family:'Liberation Mono', monospace;font-size:37px;line-height:37px;color:#aa4926;font-weight:400;white-space:pre;-webkit-text-stroke:0.6px #aa4926">cache_path</div>
<div class="t" style="left:1350.0px;top:373.7px;font-family:'Liberation Mono', monospace;font-size:37px;line-height:37px;color:#a9b7c6;font-weight:400;white-space:pre;-webkit-text-stroke:0.6px #a9b7c6">=</div>
<div class="t" style="left:1372.0px;top:373.7px;font-family:'Liberation Mono', monospace;font-size:37px;line-height:37px;color:#cc7832;font-weight:400;white-space:pre;-webkit-text-stroke:0.6px #cc7832">True</div>
<div class="t" style="left:1460.0px;top:373.7px;font-family:'Liberation Mono', monospace;font-size:37px;line-height:37px;color:#a9b7c6;font-weight:400;white-space:pre;-webkit-text-stroke:0.6px #a9b7c6">)</div>
<div class="t" style="left:910.0px;top:505.7px;font-family:'Liberation Mono', monospace;font-size:37px;line-height:37px;color:#bbb529;font-weight:400;white-space:pre;-webkit-text-stroke:0.6px #bbb529">@bot.register</div>
<div class="t" style="left:1196.0px;top:505.7px;font-family:'Liberation Mono', monospace;font-size:37px;line-height:37px;color:#a9b7c6;font-weight:400;white-space:pre;-webkit-text-stroke:0.6px #a9b7c6">(</div>
<div class="t" style="left:1218.0px;top:505.7px;font-family:'Liberation Mono', monospace;font-size:37px;line-height:37px;color:#aa4926;font-weight:400;white-space:pre;-webkit-text-stroke:0.6px #aa4926">msg_types</div>
<div class="t" style="left:1416.0px;top:505.7px;font-family:'Liberation Mono', monospace;font-size:37px;line-height:37px;color:#a9b7c6;font-weight:400;white-space:pre;-webkit-text-stroke:0.6px #a9b7c6">=FRIENDS)</div>
<div class="t" style="left:910.0px;top:549.7px;font-family:'Liberation Mono', monospace;font-size:37px;line-height:37px;color:#cc7832;font-weight:400;white-space:pre;-webkit-text-stroke:0.6px #cc7832">def</div>
<div class="t" style="left:998.0px;top:549.7px;font-family:'Liberation Mono', monospace;font-size:37px;line-height:37px;color:#ffc66d;font-weight:400;white-space:pre;-webkit-text-stroke:0.6px #ffc66d">auto_reply</div>
<div class="t" style="left:1218.0px;top:549.7px;font-family:'Liberation Mono', monospace;font-size:37px;line-height:37px;color:#a9b7c6;font-weight:400;white-space:pre;-webkit-text-stroke:0.6px #a9b7c6">(msg):</div>
<div class="t" style="left:998.0px;top:593.7px;font-family:'Liberation Mono', monospace;font-size:37px;line-height:37px;color:#6a8759;font-weight:400;white-space:pre;-webkit-text-stroke:0.6px #6a8759">&quot;&quot;&quot;</div>
<svg class="s" style="left:1064px;top:592px;color:#6a8759" width="34" height="34"><use href="#cj10" width="34" height="34"/></svg>
<svg class="s" style="left:1100px;top:592px;color:#6a8759" width="34" height="34"><use href="#cj11" width="34" height="34"/></svg>
<svg class="s" style="left:1136px;top:592px;color:#6a8759" width="34" height="34"><use href="#cj12" width="34" height="34"/></svg>
<svg class="s" style="left:1172px;top:592px;color:#6a8759" width="34" height="34"><use href="#cj13" width="34" height="34"/></svg>
<svg class="s" style="left:1208px;top:592px;color:#6a8759" width="34" height="34"><use href="#cj14" width="34" height="34"/></svg>
<svg class="s" style="left:1244px;top:592px;color:#6a8759" width="34" height="34"><use href="#cj15" width="34" height="34"/></svg>
<svg class="s" style="left:1280px;top:592px;color:#6a8759" width="34" height="34"><use href="#cj16" width="34" height="34"/></svg>
<svg class="s" style="left:1316px;top:592px;color:#6a8759" width="34" height="34"><use href="#cj17" width="34" height="34"/></svg>
<div class="t" style="left:1352.0px;top:593.7px;font-family:'Liberation Mono', monospace;font-size:37px;line-height:37px;color:#6a8759;font-weight:400;white-space:pre;-webkit-text-stroke:0.6px #6a8759">&quot;&quot;&quot;</div>
<div class="t" style="left:998.0px;top:637.7px;font-family:'Liberation Mono', monospace;font-size:37px;line-height:37px;color:#a9b7c6;font-weight:400;white-space:pre;-webkit-text-stroke:0.6px #a9b7c6">wx_friend.auto_accept_friends(msg)</div>
<div class="t" style="left:910.0px;top:769.7px;font-family:'Liberation Mono', monospace;font-size:37px;line-height:37px;color:#bbb529;font-weight:400;white-space:pre;-webkit-text-stroke:0.6px #bbb529">@bot.register</div>
<div class="t" style="left:1196.0px;top:769.7px;font-family:'Liberation Mono', monospace;font-size:37px;line-height:37px;color:#a9b7c6;font-weight:400;white-space:pre;-webkit-text-stroke:0.6px #a9b7c6">(</div>
<div class="t" style="left:1218.0px;top:769.7px;font-family:'Liberation Mono', monospace;font-size:37px;line-height:37px;color:#aa4926;font-weight:400;white-space:pre;-webkit-text-stroke:0.6px #aa4926">chats</div>
<div class="t" style="left:1328.0px;top:769.7px;font-family:'Liberation Mono', monospace;font-size:37px;line-height:37px;color:#a9b7c6;font-weight:400;white-space:pre;-webkit-text-stroke:0.6px #a9b7c6">=Friend)</div>
<div class="t" style="left:910.0px;top:813.7px;font-family:'Liberation Mono', monospace;font-size:37px;line-height:37px;color:#cc7832;font-weight:400;white-space:pre;-webkit-text-stroke:0.6px #cc7832">def</div>
<div class="t" style="left:998.0px;top:813.7px;font-family:'Liberation Mono', monospace;font-size:37px;line-height:37px;color:#ffc66d;font-weight:400;white-space:pre;-webkit-text-stroke:0.6px #ffc66d">auto_reply</div>
<div class="t" style="left:1218.0px;top:813.7px;font-family:'Liberation Mono', monospace;font-size:37px;line-height:37px;color:#a9b7c6;font-weight:400;white-space:pre;-webkit-text-stroke:0.6px #a9b7c6">(msg):</div>
<div class="t" style="left:998.0px;top:857.7px;font-family:'Liberation Mono', monospace;font-size:37px;line-height:37px;color:#6a8759;font-weight:400;white-space:pre;-webkit-text-stroke:0.6px #6a8759">&quot;&quot;&quot;</div>
<svg class="s" style="left:1064px;top:856px;color:#6a8759" width="34" height="34"><use href="#cj10" width="34" height="34"/></svg>
<svg class="s" style="left:1100px;top:856px;color:#6a8759" width="34" height="34"><use href="#cj11" width="34" height="34"/></svg>
<svg class="s" style="left:1136px;top:856px;color:#6a8759" width="34" height="34"><use href="#cj18" width="34" height="34"/></svg>
<svg class="s" style="left:1172px;top:856px;color:#6a8759" width="34" height="34"><use href="#cj19" width="34" height="34"/></svg>
<svg class="s" style="left:1208px;top:856px;color:#6a8759" width="34" height="34"><use href="#cj14" width="34" height="34"/></svg>
<svg class="s" style="left:1244px;top:856px;color:#6a8759" width="34" height="34"><use href="#cj15" width="34" height="34"/></svg>
<div class="t" style="left:1280.0px;top:857.7px;font-family:'Liberation Mono', monospace;font-size:37px;line-height:37px;color:#6a8759;font-weight:400;white-space:pre;-webkit-text-stroke:0.6px #6a8759">&quot;&quot;&quot;</div>
<div class="t" style="left:998.0px;top:901.7px;font-family:'Liberation Mono', monospace;font-size:37px;line-height:37px;color:#cc7832;font-weight:400;white-space:pre;-webkit-text-stroke:0.6px #cc7832">if</div>
<div class="t" style="left:1064.0px;top:901.7px;font-family:'Liberation Mono', monospace;font-size:37px;line-height:37px;color:#a9b7c6;font-weight:400;white-space:pre;-webkit-text-stroke:0.6px #a9b7c6">msg.type == TEXT:</div>
<div class="t" style="left:1086.0px;top:945.7px;font-family:'Liberation Mono', monospace;font-size:37px;line-height:37px;color:#a9b7c6;font-weight:400;white-space:pre;-webkit-text-stroke:0.6px #a9b7c6">wx_friend.auto_reply(msg)</div>
<div class="t" style="left:998.0px;top:989.7px;font-family:'Liberation Mono', monospace;font-size:37px;line-height:37px;color:#cc7832;font-weight:400;white-space:pre;-webkit-text-stroke:0.6px #cc7832">elif</div>
<div class="t" style="left:1108.0px;top:989.7px;font-family:'Liberation Mono', monospace;font-size:37px;line-height:37px;color:#a9b7c6;font-weight:400;white-space:pre;-webkit-text-stroke:0.6px #a9b7c6">msg.type == RECORDING:</div>
<div class="t" style="left:1086.0px;top:1033.7px;font-family:'Liberation Mono', monospace;font-size:37px;line-height:37px;color:#cc7832;font-weight:400;white-space:pre;-webkit-text-stroke:0.6px #cc7832">return</div>
<div class="t" style="left:1240.0px;top:1033.7px;font-family:'Liberation Mono', monospace;font-size:37px;line-height:37px;color:#6a8759;font-weight:400;white-space:pre;-webkit-text-stroke:0.6px #6a8759">&#x27;</div>
<svg class="s" style="left:1262px;top:1032px;color:#6a8759" width="34" height="34"><use href="#cj20" width="34" height="34"/></svg>
<svg class="s" style="left:1298px;top:1032px;color:#6a8759" width="34" height="34"><use href="#cj21" width="34" height="34"/></svg>
<svg class="s" style="left:1334px;top:1032px;color:#6a8759" width="34" height="34"><use href="#cj20" width="34" height="34"/></svg>
<svg class="s" style="left:1370px;top:1032px;color:#6a8759" width="34" height="34"><use href="#cj21" width="34" height="34"/></svg>
<svg class="s" style="left:1406px;top:1054px;" width="36" height="14" viewBox="0 0 36 14"><path d="M6,2 C9,3 9,8 5,12" fill="none" stroke="#6a8759" stroke-width="3"/></svg>
<svg class="s" style="left:1442px;top:1032px;color:#6a8759" width="34" height="34"><use href="#cj22" width="34" height="34"/></svg>
<svg class="s" style="left:1478px;top:1032px;color:#6a8759" width="34" height="34"><use href="#cj23" width="34" height="34"/></svg>
<svg class="s" style="left:1514px;top:1032px;color:#6a8759" width="34" height="34"><use href="#cj24" width="34" height="34"/></svg>
<svg class="s" style="left:1550px;top:1032px;color:#6a8759" width="34" height="34"><use href="#cj25" width="34" height="34"/></svg>
<div class="t" style="left:1586.0px;top:1033.7px;font-family:'Liberation Mono', monospace;font-size:37px;line-height:37px;color:#6a8759;font-weight:400;white-space:pre;-webkit-text-stroke:0.6px #6a8759">&#x27;</div>
<div class="t" style="left:998.0px;top:1077.7px;font-family:'Liberation Mono', monospace;font-size:37px;line-height:37px;color:#cc7832;font-weight:400;white-space:pre;-webkit-text-stroke:0.6px #cc7832">else</div>
<div class="t" style="left:1086.0px;top:1077.7px;font-family:'Liberation Mono', monospace;font-size:37px;line-height:37px;color:#a9b7c6;font-weight:400;white-space:pre;-webkit-text-stroke:0.6px #a9b7c6">:</div>
<div class="t" style="left:1086.0px;top:1121.7px;font-family:'Liberation Mono', monospace;font-size:37px;line-height:37px;color:#cc7832;font-weight:400;white-space:pre;-webkit-text-stroke:0.6px #cc7832">pass</div>
<div class="t" style="left:910.0px;top:1253.7px;font-family:'Liberation Mono', monospace;font-size:37px;line-height:37px;color:#808080;font-weight:400;white-space:pre;-webkit-text-stroke:0.6px #808080"># </div>
<svg class="s" style="left:954px;top:1252px;color:#808080" width="34" height="34"><use href="#cj26" width="34" height="34"/></svg>
<svg class="s" style="left:990px;top:1252px;color:#808080" width="34" height="34"><use href="#cj27" width="34" height="34"/></svg>
<svg class="s" style="left:1026px;top:1252px;color:#808080" width="34" height="34"><use href="#cj28" width="34" height="34"/></svg>
<svg class="s" style="left:1062px;top:1252px;color:#808080" width="34" height="34"><use href="#cj29" width="34" height="34"/></svg>
<svg class="s" style="left:1098px;top:1274px;" width="36" height="14" viewBox="0 0 36 14"><path d="M6,2 C9,3 9,8 5,12" fill="none" stroke="#808080" stroke-width="3"/></svg>
<svg class="s" style="left:1134px;top:1252px;color:#808080" width="34" height="34"><use href="#cj30" width="34" height="34"/></svg>
<svg class="s" style="left:1170px;top:1252px;color:#808080" width="34" height="34"><use href="#cj31" width="34" height="34"/></svg>
<svg class="s" style="left:1206px;top:1252px;color:#808080" width="34" height="34"><use href="#cj32" width="34" height="34"/></svg>
<svg class="s" style="left:1242px;top:1252px;color:#808080" width="34" height="34"><use href="#cj33" width="34" height="34"/></svg>
<svg class="s" style="left:1278px;top:1274px;" width="36" height="14" viewBox="0 0 36 14"><path d="M6,2 C9,3 9,8 5,12" fill="none" stroke="#808080" stroke-width="3"/></svg>
<svg class="s" style="left:1314px;top:1252px;color:#808080" width="34" height="34"><use href="#cj34" width="34" height="34"/></svg>
<svg class="s" style="left:1350px;top:1252px;color:#808080" width="34" height="34"><use href="#cj33" width="34" height="34"/></svg>
<svg class="s" style="left:1386px;top:1252px;color:#808080" width="34" height="34"><use href="#cj35" width="34" height="34"/></svg>
<svg class="s" style="left:1422px;top:1252px;color:#808080" width="34" height="34"><use href="#cj36" width="34" height="34"/></svg>
<svg class="s" style="left:1458px;top:1252px;color:#808080" width="34" height="34"><use href="#cj37" width="34" height="34"/></svg>
<svg class="s" style="left:1494px;top:1252px;color:#808080" width="34" height="34"><use href="#cj38" width="34" height="34"/></svg>
<svg class="s" style="left:1530px;top:1252px;color:#808080" width="34" height="34"><use href="#cj39" width="34" height="34"/></svg>
<div class="t" style="left:910.0px;top:1297.7px;font-family:'Liberation Mono', monospace;font-size:37px;line-height:37px;color:#a9b7c6;font-weight:400;white-space:pre;-webkit-text-stroke:0.6px #a9b7c6">embed()</div>
<div class="t" style="left:786.0px;top:153.7px;font-family:'Liberation Mono', monospace;font-size:37px;line-height:37px;color:#686a6c;font-weight:400;-webkit-text-stroke:0.5px #686a6c">1</div>
<div class="t" style="left:786.0px;top:197.7px;font-family:'Liberation Mono', monospace;font-size:37px;line-height:37px;color:#686a6c;font-weight:400;-webkit-text-stroke:0.5px #686a6c">2</div>
<div class="t" style="left:786.0px;top:241.7px;font-family:'Liberation Mono', monospace;font-size:37px;line-height:37px;color:#686a6c;font-weight:400;-webkit-text-stroke:0.5px #686a6c">3</div>
<div class="t" style="left:786.0px;top:285.7px;font-family:'Liberation Mono', monospace;font-size:37px;line-height:37px;color:#686a6c;font-weight:400;-webkit-text-stroke:0.5px #686a6c">4</div>
<div class="t" style="left:786.0px;top:329.7px;font-family:'Liberation Mono', monospace;font-size:37px;line-height:37px;color:#686a6c;font-weight:400;-webkit-text-stroke:0.5px #686a6c">5</div>
<div class="t" style="left:786.0px;top:373.7px;font-family:'Liberation Mono', monospace;font-size:37px;line-height:37px;color:#686a6c;font-weight:400;-webkit-text-stroke:0.5px #686a6c">6</div>
<div class="t" style="left:786.0px;top:417.7px;font-family:'Liberation Mono', monospace;font-size:37px;line-height:37px;color:#686a6c;font-weight:400;-webkit-text-stroke:0.5px #686a6c">7</div>
<div class="t" style="left:786.0px;top:461.7px;font-family:'Liberation Mono', monospace;font-size:37px;line-height:37px;color:#a4a3a3;font-weight:400;-webkit-text-stroke:0.5px #a4a3a3">8</div>
<div class="t" style="left:786.0px;top:505.7px;font-family:'Liberation Mono', monospace;font-size:37px;line-height:37px;color:#686a6c;font-weight:400;-webkit-text-stroke:0.5px #686a6c">9</div>
<div class="t" style="left:764.0px;top:549.7px;font-family:'Liberation Mono', monospace;font-size:37px;line-height:37px;color:#686a6c;font-weight:400;-webkit-text-stroke:0.5px #686a6c">10</div>
<div class="t" style="left:764.0px;top:593.7px;font-family:'Liberation Mono', monospace;font-size:37px;line-height:37px;color:#686a6c;font-weight:400;-webkit-text-stroke:0.5px #686a6c">11</div>
<div class="t" style="left:764.0px;top:637.7px;font-family:'Liberation Mono', monospace;font-size:37px;line-height:37px;color:#686a6c;font-weight:400;-webkit-text-stroke:0.5px #686a6c">12</div>
<div class="t" style="left:764.0px;top:681.7px;font-family:'Liberation Mono', monospace;font-size:37px;line-height:37px;color:#686a6c;font-weight:400;-webkit-text-stroke:0.5px #686a6c">13</div>
<div class="t" style="left:764.0px;top:725.7px;font-family:'Liberation Mono', monospace;font-size:37px;line-height:37px;color:#686a6c;font-weight:400;-webkit-text-stroke:0.5px #686a6c">14</div>
<div class="t" style="left:764.0px;top:769.7px;font-family:'Liberation Mono', monospace;font-size:37px;line-height:37px;color:#686a6c;font-weight:400;-webkit-text-stroke:0.5px #686a6c">15</div>
<div class="t" style="left:764.0px;top:813.7px;font-family:'Liberation Mono', monospace;font-size:37px;line-height:37px;color:#686a6c;font-weight:400;-webkit-text-stroke:0.5px #686a6c">16</div>
<div class="t" style="left:764.0px;top:857.7px;font-family:'Liberation Mono', monospace;font-size:37px;line-height:37px;color:#686a6c;font-weight:400;-webkit-text-stroke:0.5px #686a6c">17</div>
<div class="t" style="left:764.0px;top:901.7px;font-family:'Liberation Mono', monospace;font-size:37px;line-height:37px;color:#686a6c;font-weight:400;-webkit-text-stroke:0.5px #686a6c">18</div>
<div class="t" style="left:764.0px;top:945.7px;font-family:'Liberation Mono', monospace;font-size:37px;line-height:37px;color:#686a6c;font-weight:400;-webkit-text-stroke:0.5px #686a6c">19</div>
<div class="t" style="left:764.0px;top:989.7px;font-family:'Liberation Mono', monospace;font-size:37px;line-height:37px;color:#686a6c;font-weight:400;-webkit-text-stroke:0.5px #686a6c">20</div>
<div class="t" style="left:764.0px;top:1033.7px;font-family:'Liberation Mono', monospace;font-size:37px;line-height:37px;color:#686a6c;font-weight:400;-webkit-text-stroke:0.5px #686a6c">21</div>
<div class="t" style="left:764.0px;top:1077.7px;font-family:'Liberation Mono', monospace;font-size:37px;line-height:37px;color:#686a6c;font-weight:400;-webkit-text-stroke:0.5px #686a6c">22</div>
<div class="t" style="left:764.0px;top:1121.7px;font-family:'Liberation Mono', monospace;font-size:37px;line-height:37px;color:#686a6c;font-weight:400;-webkit-text-stroke:0.5px #686a6c">23</div>
<div class="t" style="left:764.0px;top:1165.7px;font-family:'Liberation Mono', monospace;font-size:37px;line-height:37px;color:#686a6c;font-weight:400;-webkit-text-stroke:0.5px #686a6c">24</div>
<div class="t" style="left:764.0px;top:1209.7px;font-family:'Liberation Mono', monospace;font-size:37px;line-height:37px;color:#686a6c;font-weight:400;-webkit-text-stroke:0.5px #686a6c">25</div>
<div class="t" style="left:764.0px;top:1253.7px;font-family:'Liberation Mono', monospace;font-size:37px;line-height:37px;color:#686a6c;font-weight:400;-webkit-text-stroke:0.5px #686a6c">26</div>
<div class="t" style="left:764.0px;top:1297.7px;font-family:'Liberation Mono', monospace;font-size:37px;line-height:37px;color:#686a6c;font-weight:400;-webkit-text-stroke:0.5px #686a6c">27</div>
<div class="t" style="left:764.0px;top:1341.7px;font-family:'Liberation Mono', monospace;font-size:37px;line-height:37px;color:#686a6c;font-weight:400;-webkit-text-stroke:0.5px #686a6c">28</div>
<div class="t" style="left:764.0px;top:1385.7px;font-family:'Liberation Mono', monospace;font-size:37px;line-height:37px;color:#686a6c;font-weight:400;-webkit-text-stroke:0.5px #686a6c">29</div>
<svg class="s" style="left:885px;top:160px;" width="22" height="30" viewBox="0 0 22 30"><path d="M1,1H21V19L11,29L1,19Z" fill="#313335" stroke="#6b6b6b" stroke-width="1.6"/><path d="M6,11H16" stroke="#8a8a8a" stroke-width="1.6"/></svg>
<svg class="s" style="left:885px;top:556px;" width="22" height="30" viewBox="0 0 22 30"><path d="M1,1H21V19L11,29L1,19Z" fill="#313335" stroke="#6b6b6b" stroke-width="1.6"/><path d="M6,11H16" stroke="#8a8a8a" stroke-width="1.6"/></svg>
<svg class="s" style="left:885px;top:820px;" width="22" height="30" viewBox="0 0 22 30"><path d="M1,1H21V19L11,29L1,19Z" fill="#313335" stroke="#6b6b6b" stroke-width="1.6"/><path d="M6,11H16" stroke="#8a8a8a" stroke-width="1.6"/></svg>
<svg class="s" style="left:885px;top:243px;" width="22" height="30" viewBox="0 0 22 30"><path d="M1,29H21V11L11,1L1,11Z" fill="#313335" stroke="#6b6b6b" stroke-width="1.6"/><path d="M6,19H16" stroke="#8a8a8a" stroke-width="1.6"/></svg>
<svg class="s" style="left:885px;top:639px;" width="22" height="30" viewBox="0 0 22 30"><path d="M1,29H21V11L11,1L1,11Z" fill="#313335" stroke="#6b6b6b" stroke-width="1.6"/><path d="M6,19H16" stroke="#8a8a8a" stroke-width="1.6"/></svg>
<svg class="s" style="left:885px;top:1123px;" width="22" height="30" viewBox="0 0 22 30"><path d="M1,29H21V11L11,1L1,11Z" fill="#313335" stroke="#6b6b6b" stroke-width="1.6"/><path d="M6,19H16" stroke="#8a8a8a" stroke-width="1.6"/></svg>
<div class="b" style="left:1003px;top:940px;width:1px;height:44px;background:#3b3b3b;"></div>
<div class="b" style="left:1003px;top:1028px;width:1px;height:44px;background:#3b3b3b;"></div>
<div class="b" style="left:1003px;top:1116px;width:1px;height:44px;background:#3b3b3b;"></div>
<div class="b" style="left:876px;top:1248px;width:19px;height:43px;background:#3b5a3b;"></div>
<div class="b" style="left:2812px;top:152px;width:12px;height:20px;background:#8c7e57;"></div>
<div class="b" style="left:2816px;top:184px;width:8px;height:1176px;background:#4a4a4a;border-radius:4px 0 0 4px"></div>
<div class="b" style="left:2808px;top:1224px;width:16px;height:37px;background:#8c7e57;"></div>
<div class="b" style="left:2801px;top:1144px;width:4px;height:11px;background:#499c54;"></div>
<div class="b" style="left:1692px;top:496px;width:522px;height:1098px;background:#3c3d3f;box-shadow:-4px 0 8px rgba(0,0,0,0.25)"></div>
<div class="t" style="left:1746.8px;top:507.0px;font-family:'Liberation Sans', sans-serif;font-size:25px;line-height:25px;color:#c4c4c4;font-weight:400;">Copy Reference</div>
<div class="t" style="left:2159.0px;top:507.0px;font-family:'Liberation Sans', sans-serif;font-size:25px;line-height:25px;color:#c4c4c4;font-weight:400;">C</div>
<svg class="s" style="left:2138px;top:509px;" width="20" height="20"><use href="#cmd" width="20" height="20"/></svg>
<svg class="s" style="left:2115px;top:509px;" width="20" height="20"><use href="#shift" width="20" height="20"/></svg>
<svg class="s" style="left:2091px;top:509px;" width="20" height="20"><use href="#opt" width="20" height="20"/></svg>
<div class="t" style="left:1746.8px;top:540.9px;font-family:'Liberation Sans', sans-serif;font-size:25px;line-height:25px;color:#c4c4c4;font-weight:400;">Paste</div>
<div class="t" style="left:2160.3px;top:540.9px;font-family:'Liberation Sans', sans-serif;font-size:25px;line-height:25px;color:#c4c4c4;font-weight:400;">V</div>
<svg class="s" style="left:2140px;top:543px;" width="20" height="20"><use href="#cmd" width="20" height="20"/></svg>
<div class="t" style="left:1746.8px;top:574.4px;font-family:'Liberation Sans', sans-serif;font-size:25px;line-height:25px;color:#c4c4c4;font-weight:400;">Paste from History...</div>
<div class="t" style="left:2160.3px;top:574.4px;font-family:'Liberation Sans', sans-serif;font-size:25px;line-height:25px;color:#c4c4c4;font-weight:400;">V</div>
<svg class="s" style="left:2140px;top:577px;" width="20" height="20"><use href="#cmd" width="20" height="20"/></svg>
<svg class="s" style="left:2116px;top:577px;" width="20" height="20"><use href="#shift" width="20" height="20"/></svg>
<div class="t" style="left:1746.8px;top:608.9px;font-family:'Liberation Sans', sans-serif;font-size:25px;line-height:25px;color:#c4c4c4;font-weight:400;">Paste without Formatting</div>
<div class="t" style="left:2160.3px;top:608.9px;font-family:'Liberation Sans', sans-serif;font-size:25px;line-height:25px;color:#c4c4c4;font-weight:400;">V</div>
<svg class="s" style="left:2140px;top:611px;" width="20" height="20"><use href="#cmd" width="20" height="20"/></svg>
<svg class="s" style="left:2116px;top:611px;" width="20" height="20"><use href="#shift" width="20" height="20"/></svg>
<svg class="s" style="left:2093px;top:611px;" width="20" height="20"><use href="#opt" width="20" height="20"/></svg>
<div class="t" style="left:1746.8px;top:642.4px;font-family:'Liberation Sans', sans-serif;font-size:25px;line-height:25px;color:#c4c4c4;font-weight:400;">Column Selection Mode</div>
<div class="t" style="left:2163.1px;top:642.4px;font-family:'Liberation Sans', sans-serif;font-size:25px;line-height:25px;color:#c4c4c4;font-weight:400;">8</div>
<svg class="s" style="left:2143px;top:645px;" width="20" height="20"><use href="#cmd" width="20" height="20"/></svg>
<svg class="s" style="left:2119px;top:645px;" width="20" height="20"><use href="#shift" width="20" height="20"/></svg>
<div class="t" style="left:1746.8px;top:701.4px;font-family:'Liberation Sans', sans-serif;font-size:25px;line-height:25px;color:#c4c4c4;font-weight:400;">Refactor</div>
<svg class="s" style="left:2175px;top:705px;" width="18" height="18" viewBox="0 0 18 18"><path d="M1,1L17,9L1,17Z" fill="#afb1b3"/></svg>
<div class="t" style="left:1746.8px;top:759.4px;font-family:'Liberation Sans', sans-serif;font-size:25px;line-height:25px;color:#c4c4c4;font-weight:400;">Folding</div>
<svg class="s" style="left:2175px;top:763px;" width="18" height="18" viewBox="0 0 18 18"><path d="M1,1L17,9L1,17Z" fill="#afb1b3"/></svg>
<div class="t" style="left:1746.8px;top:817.4px;font-family:'Liberation Sans', sans-serif;font-size:25px;line-height:25px;color:#c4c4c4;font-weight:400;">Go To</div>
<svg class="s" style="left:2175px;top:821px;" width="18" height="18" viewBox="0 0 18 18"><path d="M1,1L17,9L1,17Z" fill="#afb1b3"/></svg>
<div class="t" style="left:1746.8px;top:851.4px;font-family:'Liberation Sans', sans-serif;font-size:25px;line-height:25px;color:#c4c4c4;font-weight:400;">Generate...</div>
<div class="t" style="left:2159.0px;top:851.4px;font-family:'Liberation Sans', sans-serif;font-size:25px;line-height:25px;color:#c4c4c4;font-weight:400;">N</div>
<svg class="s" style="left:2138px;top:854px;" width="20" height="20"><use href="#cmd" width="20" height="20"/></svg>
<div class="t" style="left:1746.8px;top:909.2px;font-family:'Liberation Sans', sans-serif;font-size:25px;line-height:25px;color:#c4c4c4;font-weight:400;">Run &#x27;robot&#x27;</div>
<div class="t" style="left:2159.0px;top:909.2px;font-family:'Liberation Sans', sans-serif;font-size:25px;line-height:25px;color:#c4c4c4;font-weight:400;">R</div>
<svg class="s" style="left:2138px;top:911px;" width="20" height="20"><use href="#shift" width="20" height="20"/></svg>
<svg class="s" style="left:2115px;top:911px;" width="20" height="20"><use href="#ctrl" width="20" height="20"/></svg>
<div class="t" style="left:1746.8px;top:943.2px;font-family:'Liberation Sans', sans-serif;font-size:25px;line-height:25px;color:#c4c4c4;font-weight:400;">Debug &#x27;robot&#x27;</div>
<div class="t" style="left:2159.0px;top:943.2px;font-family:'Liberation Sans', sans-serif;font-size:25px;line-height:25px;color:#c4c4c4;font-weight:400;">D</div>
<svg class="s" style="left:2138px;top:945px;" width="20" height="20"><use href="#shift" width="20" height="20"/></svg>
<svg class="s" style="left:2115px;top:945px;" width="20" height="20"><use href="#ctrl" width="20" height="20"/></svg>
<div class="t" style="left:1746.8px;top:977.2px;font-family:'Liberation Sans', sans-serif;font-size:25px;line-height:25px;color:#c4c4c4;font-weight:400;">Run &#x27;robot&#x27; with Coverage</div>
<div class="t" style="left:1746.8px;top:1011.2px;font-family:'Liberation Sans', sans-serif;font-size:25px;line-height:25px;color:#c4c4c4;font-weight:400;">Profile &#x27;robot&#x27;</div>
<div class="t" style="left:1746.8px;top:1045.1px;font-family:'Liberation Sans', sans-serif;font-size:25px;line-height:25px;color:#c4c4c4;font-weight:400;">Concurrency Diagram for &#x27;robot&#x27;</div>
<div class="t" style="left:1746.8px;top:1102.6px;font-family:'Liberation Sans', sans-serif;font-size:25px;line-height:25px;color:#c4c4c4;font-weight:400;">Save &#x27;robot&#x27;</div>
<div class="t" style="left:1746.8px;top:1161.4px;font-family:'Liberation Sans', sans-serif;font-size:25px;line-height:25px;color:#c4c4c4;font-weight:400;">Reveal in Finder</div>
<div class="t" style="left:1746.8px;top:1195.4px;font-family:'Liberation Sans', sans-serif;font-size:25px;line-height:25px;color:#c4c4c4;font-weight:400;">Open in Terminal</div>
<div class="t" style="left:1746.8px;top:1253.2px;font-family:'Liberation Sans', sans-serif;font-size:25px;line-height:25px;color:#c4c4c4;font-weight:400;">Local History</div>
<svg class="s" style="left:2175px;top:1256px;" width="18" height="18" viewBox="0 0 18 18"><path d="M1,1L17,9L1,17Z" fill="#afb1b3"/></svg>
<div class="t" style="left:1746.8px;top:1287.2px;font-family:'Liberation Sans', sans-serif;font-size:25px;line-height:25px;color:#c4c4c4;font-weight:400;">Git</div>
<svg class="s" style="left:2175px;top:1290px;" width="18" height="18" viewBox="0 0 18 18"><path d="M1,1L17,9L1,17Z" fill="#afb1b3"/></svg>
<div class="t" style="left:1746.8px;top:1345.0px;font-family:'Liberation Sans', sans-serif;font-size:25px;line-height:25px;color:#c4c4c4;font-weight:400;">Execute Line in Console</div>
<div class="t" style="left:2160.3px;top:1345.0px;font-family:'Liberation Sans', sans-serif;font-size:25px;line-height:25px;color:#c4c4c4;font-weight:400;">E</div>
<svg class="s" style="left:2140px;top:1347px;" width="20" height="20"><use href="#shift" width="20" height="20"/></svg>
<svg class="s" style="left:2116px;top:1347px;" width="20" height="20"><use href="#opt" width="20" height="20"/></svg>
<div class="t" style="left:1746.8px;top:1379.3px;font-family:'Liberation Sans', sans-serif;font-size:25px;line-height:25px;color:#c4c4c4;font-weight:400;">Run File in Console</div>
<div class="t" style="left:1746.8px;top:1413.2px;font-family:'Liberation Sans', sans-serif;font-size:25px;line-height:25px;color:#c4c4c4;font-weight:400;">Compare with Clipboard</div>
<div class="t" style="left:1746.8px;top:1446.7px;font-family:'Liberation Sans', sans-serif;font-size:25px;line-height:25px;color:#c4c4c4;font-weight:400;">File Encoding</div>
<div class="t" style="left:1746.8px;top:1505.8px;font-family:'Liberation Sans', sans-serif;font-size:25px;line-height:25px;color:#c4c4c4;font-weight:400;">Diagrams</div>
<svg class="s" style="left:2175px;top:1509px;" width="18" height="18" viewBox="0 0 18 18"><path d="M1,1L17,9L1,17Z" fill="#afb1b3"/></svg>
<div class="t" style="left:1746.8px;top:1539.3px;font-family:'Liberation Sans', sans-serif;font-size:25px;line-height:25px;color:#c4c4c4;font-weight:400;">Open on GitHub</div>
<div class="t" style="left:1746.8px;top:1571.4px;font-family:'Liberation Sans', sans-serif;font-size:25px;line-height:25px;color:#c4c4c4;font-weight:400;">Create Gist...</div>
<div class="b" style="left:1692px;top:681px;width:522px;height:3px;background:#38393b;"></div>
<div class="b" style="left:1692px;top:684px;width:522px;height:4px;background:#4e5052;"></div>
<div class="b" style="left:1692px;top:688px;width:522px;height:3px;background:#38393b;"></div>
<div class="b" style="left:1692px;top:739px;width:522px;height:3px;background:#38393b;"></div>
<div class="b" style="left:1692px;top:742px;width:522px;height:4px;background:#4e5052;"></div>
<div class="b" style="left:1692px;top:746px;width:522px;height:3px;background:#38393b;"></div>
<div class="b" style="left:1692px;top:797px;width:522px;height:3px;background:#38393b;"></div>
<div class="b" style="left:1692px;top:800px;width:522px;height:4px;background:#4e5052;"></div>
<div class="b" style="left:1692px;top:804px;width:522px;height:3px;background:#38393b;"></div>
<div class="b" style="left:1692px;top:888px;width:522px;height:3px;background:#38393b;"></div>
<div class="b" style="left:1692px;top:891px;width:522px;height:4px;background:#4e5052;"></div>
<div class="b" style="left:1692px;top:895px;width:522px;height:3px;background:#38393b;"></div>
<div class="b" style="left:1692px;top:1083px;width:522px;height:3px;background:#38393b;"></div>
<div class="b" style="left:1692px;top:1086px;width:522px;height:4px;background:#4e5052;"></div>
<div class="b" style="left:1692px;top:1090px;width:522px;height:3px;background:#38393b;"></div>
<div class="b" style="left:1692px;top:1142px;width:522px;height:3px;background:#38393b;"></div>
<div class="b" style="left:1692px;top:1145px;width:522px;height:4px;background:#4e5052;"></div>
<div class="b" style="left:1692px;top:1149px;width:522px;height:3px;background:#38393b;"></div>
<div class="b" style="left:1692px;top:1232px;width:522px;height:3px;background:#38393b;"></div>
<div class="b" style="left:1692px;top:1235px;width:522px;height:4px;background:#4e5052;"></div>
<div class="b" style="left:1692px;top:1239px;width:522px;height:3px;background:#38393b;"></div>
<div class="b" style="left:1692px;top:1325px;width:522px;height:3px;background:#38393b;"></div>
<div class="b" style="left:1692px;top:1328px;width:522px;height:4px;background:#4e5052;"></div>
<div class="b" style="left:1692px;top:1332px;width:522px;height:3px;background:#38393b;"></div>
<div class="b" style="left:1692px;top:1485px;width:522px;height:3px;background:#38393b;"></div>
<div class="b" style="left:1692px;top:1488px;width:522px;height:4px;background:#4e5052;"></div>
<div class="b" style="left:1692px;top:1492px;width:522px;height:3px;background:#38393b;"></div>
<svg class="s" style="left:1710px;top:540px;" width="22" height="26" viewBox="0 0 22 26"><path d="M2,4H20V26H2Z" fill="#afb1b3"/><path d="M6,1H16V6H6Z" fill="#afb1b3"/><path d="M5,8H17V23H5Z" fill="#3c3d3f"/><path d="M8,2.5H14V4.5H8Z" fill="#3c3d3f"/></svg>
<svg class="s" style="left:1710px;top:908px;" width="24" height="26"><use href="#play" width="24" height="26"/></svg>
<svg class="s" style="left:1707px;top:942px;" width="28" height="28"><use href="#bug" width="28" height="28"/></svg>
<svg class="s" style="left:1705px;top:974px;" width="30" height="30"><use href="#cov" width="30" height="30"/></svg>
<svg class="s" style="left:1705px;top:1008px;" width="30" height="30"><use href="#prof" width="30" height="30"/></svg>
<svg class="s" style="left:1707px;top:1044px;" width="30" height="30"><use href="#conc" width="30" height="30"/></svg>
<svg class="s" style="left:1705px;top:1100px;" width="30" height="30"><use href="#py" width="30" height="30"/></svg>
<svg class="s" style="left:1709px;top:1196px;" width="24" height="22" viewBox="0 0 24 22"><rect width="24" height="22" fill="#afb1b3"/><path d="M4,5L10,9L4,13" fill="none" stroke="#3c3d3f" stroke-width="2"/><path d="M12,16H19" stroke="#3c3d3f" stroke-width="2"/></svg>
<svg class="s" style="left:1705px;top:1410px;" width="32" height="32" viewBox="0 0 32 32"><path d="M1,6H5V4H13V6H15V10H5V26H1Z" fill="#afb1b3"/><path d="M30,12H22V8L15,14L22,20V16H30Z M6,24H14V20L21,26L14,32V28H6Z" fill="#3592c4" transform="translate(0,-3)"/></svg>
<svg class="s" style="left:1705px;top:1502px;" width="30" height="30" viewBox="0 0 30 30"><rect x="1" y="1" width="28" height="5" fill="#afb1b3"/><rect x="1" y="24" width="28" height="5" fill="#afb1b3"/><path d="M8,22V10 M22,22V10" stroke="#40b6e0" stroke-width="2.2"/><path d="M4,13L8,8L12,13Z M18,13L22,8L26,13Z" fill="#40b6e0"/><path d="M15,10V22" stroke="#40b6e0" stroke-width="1.5" stroke-dasharray="2,2"/></svg>
<svg class="s" style="left:1705px;top:1537px;" width="29" height="29"><use href="#gh" width="29" height="29"/></svg>
<svg class="s" style="left:1705px;top:1569px;" width="29" height="29"><use href="#gh" width="29" height="29"/></svg>
<svg class="s" style="left:64px;top:1552px;" width="21" height="17" viewBox="0 0 21 17"><path d="M0,0H4V4H0Z M0,6.5H4V10.5H0Z M0,13H4V17H0Z M6,0H21V4H6Z M6,6.5H21V10.5H6Z M6,13H21V17H6Z" fill="#c4c4c4"/></svg>
<div class="t" style="left:94.0px;top:1549.9px;font-family:'Liberation Sans', sans-serif;font-size:22px;line-height:22px;color:#bbbbbb;font-weight:400;"><u style="text-decoration-thickness:1.5px;text-underline-offset:4px">6</u>: TODO</div>
<svg class="s" style="left:231px;top:1550px;" width="22" height="22" viewBox="0 0 22 22"><path d="M0,0H4.4V22H0Z M4.4,18H16V9H20V22H4.4Z M12,8L18,0.5L24,8Z" fill="#c8c8c8"/></svg>
<div class="t" style="left:262.0px;top:1549.4px;font-family:'Liberation Sans', sans-serif;font-size:22.5px;line-height:22.5px;color:#bbbbbb;font-weight:400;"><u style="text-decoration-thickness:1.5px;text-underline-offset:4px">9</u>: Version Control</div>
<svg class="s" style="left:492px;top:1550px;" width="22" height="20" viewBox="0 0 22 20"><rect width="22" height="20" fill="#afb1b3"/><path d="M4,4L9,8L4,12" fill="none" stroke="#3c3f41" stroke-width="2"/><path d="M11,15H17" stroke="#3c3f41" stroke-width="2"/></svg>
<div class="t" style="left:524.5px;top:1549.4px;font-family:'Liberation Sans', sans-serif;font-size:22.5px;line-height:22.5px;color:#bbbbbb;font-weight:400;">Terminal</div>
<svg class="s" style="left:662px;top:1549px;filter:grayscale(1) brightness(1.9)" width="22" height="22"><use href="#py" width="22" height="22"/></svg>
<div class="t" style="left:694.0px;top:1549.4px;font-family:'Liberation Sans', sans-serif;font-size:22.5px;line-height:22.5px;color:#bbbbbb;font-weight:400;">Python Console</div>
<div class="b" style="left:2680px;top:1548px;width:26px;height:26px;border-radius:50% 50% 0 50%;background:#48a04f"></div>
<div class="t" style="left:2687.0px;top:1551.9px;font-family:'Liberation Sans', sans-serif;font-size:19px;line-height:19px;color:#ffffff;font-weight:700;">1</div>
<div class="t" style="left:2712.0px;top:1549.7px;font-family:'Liberation Sans', sans-serif;font-size:24px;line-height:24px;color:#bbbbbb;font-weight:400;">E</div>
<div class="b" style="left:2724px;top:1550px;width:100px;height:44px;background:#f2f2f2;"></div>
<svg class="s" style="left:2728px;top:1558px;" width="34" height="32" viewBox="0 0 34 32"><path d="M25,6A12,12 0 1 0 25,26" fill="none" stroke="#a3a3a3" stroke-width="4"/><path d="M11,10L22,24M21,12L13,23 M17,17L32,6" stroke="#9a9a9a" stroke-width="3.4"/></svg>
<svg class="s" style="left:2756.0px;top:1563px;color:#9a9a9a" width="15" height="14"><use href="#cj40" width="15" height="14"/></svg>
<svg class="s" style="left:2756.8px;top:1563px;color:#9a9a9a" width="15" height="14"><use href="#cj40" width="15" height="14"/></svg>
<svg class="s" style="left:2771.5px;top:1563px;color:#9a9a9a" width="15" height="14"><use href="#cj41" width="15" height="14"/></svg>
<svg class="s" style="left:2772.3px;top:1563px;color:#9a9a9a" width="15" height="14"><use href="#cj41" width="15" height="14"/></svg>
<svg class="s" style="left:2787.0px;top:1563px;color:#9a9a9a" width="15" height="14"><use href="#cj26" width="15" height="14"/></svg>
<svg class="s" style="left:2787.8px;top:1563px;color:#9a9a9a" width="15" height="14"><use href="#cj26" width="15" height="14"/></svg>
<svg class="s" style="left:2802.5px;top:1563px;color:#9a9a9a" width="15" height="14"><use href="#cj42" width="15" height="14"/></svg>
<svg class="s" style="left:2803.3px;top:1563px;color:#9a9a9a" width="15" height="14"><use href="#cj42" width="15" height="14"/></svg>
<div class="b" style="left:2756px;top:1581px;width:63px;height:2px;background:#d2d2d2;"></div>
<svg class="s" style="left:0;top:0" width="2824" height="1594"><path d="M2109.8,97.9 L2103.9,120.5 L2100.1,115.1 L2048.1,161.5 L2045.1,158.3 L2092.4,107.3 L2087.1,103.3 Z" fill="#f4511e" stroke="#c8380f" stroke-width="1.2" stroke-linejoin="round"/></svg>
<svg class="s" style="left:0;top:0" width="2824" height="1594"><path d="M1693.5,923.3 L1668.3,963.7 L1665.2,949.6 L1542.4,1001.9 L1539.6,996.1 L1655.5,929.9 L1646.1,918.9 Z" fill="#f4511e" stroke="#c8380f" stroke-width="1.2" stroke-linejoin="round"/></svg></body></html>
